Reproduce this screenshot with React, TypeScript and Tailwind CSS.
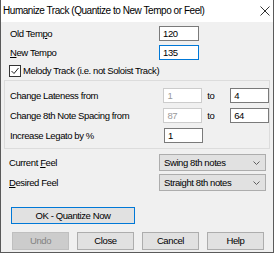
import type { ReactNode } from 'react';

const font = { fontFamily: '"Liberation Sans", Arial, sans-serif' };

function TextBox({ value, focused, disabled, w = 'w-[40px]' }: { value: string; focused?: boolean; disabled?: boolean; w?: string }) {
  const border = focused ? 'border-[#0078d7]' : disabled ? 'border-[#cccccc]' : 'border-[#7a7a7a]';
  return (
    <div className={`${w} h-[15px] bg-white border ${border} flex items-center pl-[3px] ${disabled ? 'text-[#9a9a9a]' : 'text-black'}`}>
      {value}
    </div>
  );
}

function Combo({ value }: { value: string }) {
  return (
    <div className="w-[107px] h-[17px] bg-[#e1e1e1] border border-[#adadad] flex items-center justify-between pl-[4px] pr-[5px]">
      <span>{value}</span>
      <svg width="7" height="4" viewBox="0 0 7 4" fill="none">
        <path d="M0.5 0.5 L3.5 3.5 L6.5 0.5" stroke="#606060" strokeWidth="1" />
      </svg>
    </div>
  );
}

function Button({ children, disabled, primary, w = 'w-[57px]' }: { children: ReactNode; disabled?: boolean; primary?: boolean; w?: string }) {
  const look = disabled
    ? 'bg-[#cccccc] border-[#bfbfbf] text-[#838383]'
    : primary
      ? 'bg-[#e1e1e1] border-[#0078d7] text-black'
      : 'bg-[#e1e1e1] border-[#adadad] text-black';
  return (
    <div className={`${w} h-full border ${look} flex items-center justify-center`}>
      {children}
    </div>
  );
}

export default function App() {
  return (
    <div
      className="w-[274px] h-[253px] bg-[#f0f0f0] border-x border-b border-[#5a5a5a] flex flex-col text-[9.5px] tracking-[-0.4px] text-black leading-none overflow-hidden"
      style={font}
    >
      {/* title bar */}
      <div className="h-[22px] shrink-0 bg-white flex items-center justify-between pl-[2px] pr-[3px]">
        <span className="text-[10px] tracking-[-0.45px]">Humanize Track (Quantize to New Tempo or Feel)</span>
        <svg width="10" height="10" viewBox="0 0 10 10" fill="none">
          <path d="M0.5 0.5 L9.5 9.5 M9.5 0.5 L0.5 9.5" stroke="#333" strokeWidth="1" />
        </svg>
      </div>

      <div className="mt-[4px] h-[15px] flex items-center">
        <div className="w-[158px] pl-[9px]">
          Old Tem<span className="underline">p</span>o
        </div>
        <TextBox value="120" />
      </div>
      <div className="mt-[4px] h-[15px] flex items-center">
        <div className="w-[158px] pl-[9px]">
          <span className="underline">N</span>ew Tempo
        </div>
        <TextBox value="135" focused />
      </div>

      <div className="mt-[5px] h-[12px] flex items-center pl-[8px] gap-[2px]">
        <div className="w-[12px] h-[12px] bg-white border border-[#333] flex items-center justify-center">
          <svg width="10" height="10" viewBox="0 0 10 10" fill="none">
            <path d="M1.5 5 L4 7.5 L8.5 2" stroke="#222" strokeWidth="1" />
          </svg>
        </div>
        <span>Melody Track (i.e. not Soloist Track)</span>
      </div>

      {/* group box */}
      <div className="mt-[3px] ml-[3px] w-[266px] h-[69px] border border-[#dcdcdc] pt-[7px] pl-[5px] flex flex-col gap-[5px]">
        <div className="h-[15px] flex items-center">
          <div className="w-[154px]">Change Lateness from</div>
          <TextBox value="1" disabled w="w-[39px]" />
          <div className="w-[28px] pl-[5px]">to</div>
          <TextBox value="4" w="w-[39px]" />
        </div>
        <div className="h-[15px] flex items-center">
          <div className="w-[154px]">Change 8th Note Spacing from</div>
          <TextBox value="87" disabled w="w-[39px]" />
          <div className="w-[28px] pl-[5px]">to</div>
          <TextBox value="64" w="w-[39px]" />
        </div>
        <div className="h-[15px] flex items-center">
          <div className="w-[154px]">Increase Legato by %</div>
          <TextBox value="1" w="w-[39px]" />
        </div>
      </div>

      <div className="mt-[5px] h-[17px] flex items-center">
        <div className="w-[158px] pl-[8px]">
          Current <span className="underline">F</span>eel
        </div>
        <Combo value="Swing 8th notes" />
      </div>
      <div className="mt-[3px] h-[17px] flex items-center">
        <div className="w-[158px] pl-[8px]">
          <span className="underline">D</span>esired Feel
        </div>
        <Combo value="Straight 8th notes" />
      </div>

      <div className="mt-[16px] ml-[10px] h-[17px] flex">
        <Button primary w="w-[124px]">OK - Quantize Now</Button>
      </div>

      <div className="mt-[8px] ml-[11px] h-[18px] flex gap-[8px]">
        <Button disabled>Undo</Button>
        <Button>Close</Button>
        <Button>Cancel</Button>
        <Button>Help</Button>
      </div>
    </div>
  );
}
